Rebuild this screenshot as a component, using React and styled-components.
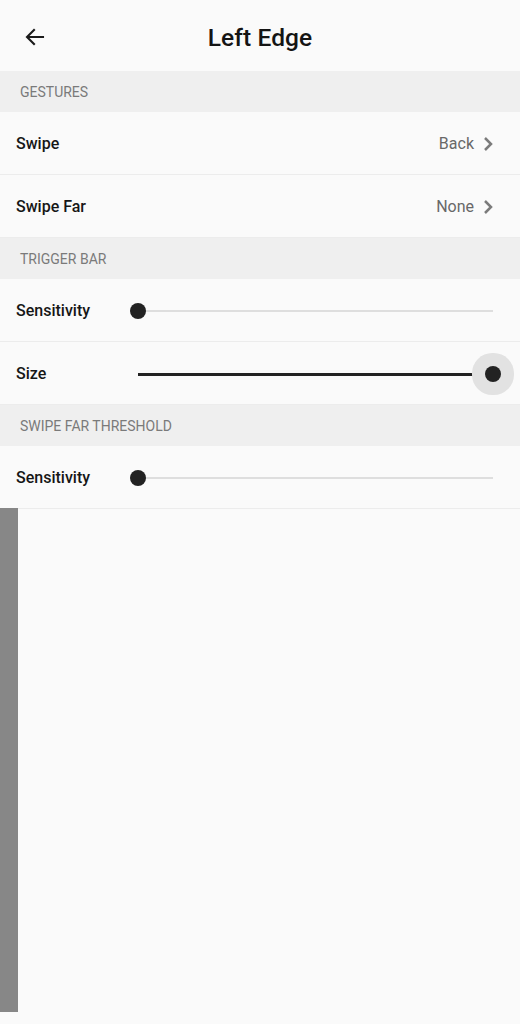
import React from 'react';
import styled, { createGlobalStyle } from 'styled-components';

const GlobalStyle = createGlobalStyle`
  html, body {
    margin: 0;
    padding: 0;
    background: #fafafa;
    font-family: Roboto, "Noto Sans", "Liberation Sans", sans-serif;
  }
`;

const Screen = styled.div`
  position: relative;
  width: 520px;
  min-height: 1024px;
  background: #fafafa;
`;

const TopBar = styled.header`
  display: grid;
  grid-template-columns: 70px 1fr 70px;
  align-items: center;
  height: 71px;
`;

const BackButton = styled.button`
  display: flex;
  align-items: center;
  justify-content: center;
  width: 48px;
  height: 48px;
  margin: 2px 0 0 11px;
  padding: 0;
  border: none;
  background: none;
  color: #1a1a1a;
`;

const Title = styled.h1`
  margin: 0;
  padding-top: 3px;
  text-align: center;
  font-size: 24.5px;
  font-weight: 500;
  color: #141414;
  letter-spacing: 0.1px;
`;

const SectionHeader = styled.div`
  display: flex;
  align-items: center;
  height: 41px;
  padding-left: 20px;
  background: #efefef;
  color: #7a7a7a;
  font-size: 14px;
  text-transform: uppercase;
`;

const Row = styled.div`
  display: flex;
  align-items: center;
  height: 62px;
  padding: 0 ${p => (p.$slider ? 19 : 26)}px 0 16px;
  border-bottom: 1px solid #ececec;
  box-sizing: content-box;
`;

const Label = styled.span`
  flex: ${p => (p.$fixed ? '0 0 114px' : '1')};
  padding-top: 1px;
  font-size: 16px;
  font-weight: 500;
  color: #161616;
`;

const Value = styled.span`
  display: flex;
  align-items: center;
  gap: 8px;
  padding-top: 1px;
  font-size: 16px;
  color: #686868;
`;

const SliderBox = styled.div`
  position: relative;
  flex: 1;
  height: 40px;
  padding: 0 8px;
`;

const Track = styled.div`
  position: relative;
  height: 40px;
`;

const Rail = styled.div`
  position: absolute;
  left: 0;
  right: 0;
  top: 20px;
  height: 2px;
  background: #dedede;
`;

const Fill = styled.div`
  position: absolute;
  left: 0;
  top: 19.5px;
  height: 3px;
  background: #222;
`;

const Thumb = styled.div`
  position: absolute;
  top: 21px;
  width: 16px;
  height: 16px;
  margin: -8px 0 0 -8px;
  border-radius: 50%;
  background: #222;
  box-shadow: ${p => (p.$focused ? '0 0 0 13px #e2e2e2' : 'none')};
`;

const EdgeBar = styled.div`
  position: absolute;
  left: 0;
  top: 508px;
  width: 18px;
  height: 504px;
  background: #878787;
`;

const ArrowBack = () => (
  <svg width="24" height="24" viewBox="0 0 24 24" fill="none">
    <path d="M20 12H4.5M11 5l-7 7 7 7" stroke="currentColor" strokeWidth="2.1" strokeLinecap="square" />
  </svg>
);

const Chevron = () => (
  <svg width="12" height="16" viewBox="0 0 12 16" fill="none">
    <path d="M3 2l6 6-6 6" stroke="#7b7b7b" strokeWidth="2.5" />
  </svg>
);

const Slider = ({ value, focused }) => (
  <SliderBox>
    <Track>
      <Rail />
      <Fill style={{ width: `${value * 100}%` }} />
      <Thumb $focused={focused} style={{ left: `${value * 100}%` }} />
    </Track>
  </SliderBox>
);

const sections = [
  {
    title: 'Gestures',
    rows: [
      { label: 'Swipe', value: 'Back' },
      { label: 'Swipe Far', value: 'None' },
    ],
  },
  {
    title: 'Trigger Bar',
    rows: [
      { label: 'Sensitivity', slider: 0 },
      { label: 'Size', slider: 1, focused: true },
    ],
  },
  {
    title: 'Swipe Far Threshold',
    rows: [{ label: 'Sensitivity', slider: 0 }],
  },
];

export default function App() {
  return (
    <Screen>
      <GlobalStyle />
      <TopBar>
        <BackButton aria-label="Back">
          <ArrowBack />
        </BackButton>
        <Title>Left Edge</Title>
        <span />
      </TopBar>
      {sections.map(section => (
        <section key={section.title}>
          <SectionHeader>{section.title}</SectionHeader>
          {section.rows.map((row, i) =>
            row.slider !== undefined ? (
              <Row key={i} $slider>
                <Label $fixed>{row.label}</Label>
                <Slider value={row.slider} focused={row.focused} />
              </Row>
            ) : (
              <Row key={i}>
                <Label>{row.label}</Label>
                <Value>
                  {row.value}
                  <Chevron />
                </Value>
              </Row>
            )
          )}
        </section>
      ))}
      <EdgeBar />
    </Screen>
  );
}
